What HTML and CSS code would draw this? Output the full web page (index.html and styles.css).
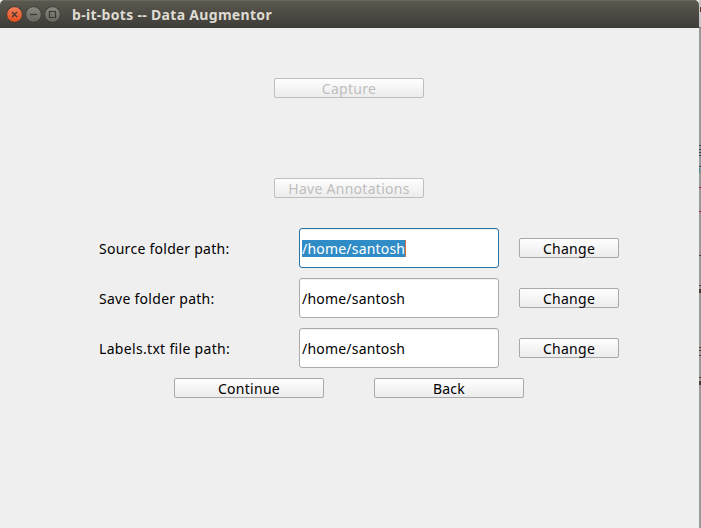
FILE: index.html
```html
<!DOCTYPE html>
<html lang="en">
<head>
<meta charset="utf-8">
<title>b-it-bots -- Data Augmentor</title>
<link rel="stylesheet" href="styles.css">
</head>
<body>
<div class="desktop">
<main class="window">
  <header class="titlebar">
    <svg class="controls" width="60" height="17" viewBox="0 0 60 17">
      <defs>
        <linearGradient id="close" x1="0" y1="0" x2="0" y2="1"><stop offset="0" stop-color="#f58059"/><stop offset="1" stop-color="#e04d1c"/></linearGradient>
        <linearGradient id="grey" x1="0" y1="0" x2="0" y2="1"><stop offset="0" stop-color="#8b8981"/><stop offset="1" stop-color="#65645d"/></linearGradient>
      </defs>
      <g stroke="#3a3833" stroke-width="1">
        <circle cx="8.5" cy="8.5" r="7.9" fill="url(#close)"/>
        <circle cx="27.5" cy="8.5" r="7.9" fill="url(#grey)"/>
        <circle cx="46.5" cy="8.5" r="7.9" fill="url(#grey)"/>
      </g>
      <g fill="none" stroke="#3a3833" stroke-width="1.2">
        <path d="M6 6l5 5M11 6l-5 5"/><path d="M24 8.5h7"/><path d="M43.5 5.5h6v6h-6z"/>
      </g>
    </svg>
    <h1 class="title">b-it-bots -- Data Augmentor</h1>
  </header>
  <section class="content">
    <button class="button wide capture" disabled>Capture</button>
    <button class="button wide annotations" disabled>Have Annotations</button>
    <div class="form">
      <span class="label source">Source folder path:</span><div class="field focused"><span class="selected">/home/santosh</span></div><button class="button change">Change</button>
      <span class="label save">Save folder path:</span><div class="field"><span>/home/santosh</span></div><button class="button change">Change</button>
      <span class="label labels">Labels.txt file path:</span><div class="field"><span>/home/santosh</span></div><button class="button change">Change</button>
    </div>
    <div class="actions"><button class="button wide continue">Continue</button><button class="button wide back">Back</button></div>
  </section>
</main>
<svg class="behind" width="2" height="528" viewBox="0 0 2 528" shape-rendering="crispEdges">
  <path fill="#999" d="M0 0h2v528H0z"/>
  <path fill="#c8c8c8" d="M0 0h2v27H0z"/>
  <path fill="#777" d="M0 27h2v1H0z"/>
  <path fill="#623b2b" d="M1 7h1v5H1z"/>
  <path fill="#354358" d="M0 145h2v1H0zM0 149h2v1H0zM0 152h2v1H0zM0 155h2v1H0zM0 166h2v1H0z"/>
  <path fill="#448b91" d="M0 168h1v5H0z"/>
  <path fill="#a72047" d="M0 187h2v1H0zM0 211h2v1H0z"/>
  <path fill="#443e3b" d="M0 255h2v1H0zM0 285h2v1H0zM0 289h2v4H0zM0 347h2v1H0zM0 350h2v1H0zM0 355h2v1H0zM0 377h2v1H0zM0 381h2v4H0z"/>
</svg>
</div>
</body>
</html>
```
FILE: styles.css
```css
* { box-sizing: border-box; }
body { margin: 0; background: #999; font: 14px/20px "Noto Sans", sans-serif; letter-spacing: 0.27px; color: #000; }
.desktop { display: flex; width: 701px; height: 528px; overflow: hidden; }
.window { width: 699px; height: 528px; background: #efefef; }
.behind { display: block; }
.titlebar { display: flex; align-items: center; height: 28px; padding: 1px 6px 0; border-radius: 5px 5px 0 0; background: linear-gradient(#5b594f, #3d3c38); box-shadow: inset 0 1px #69675c; }
.controls { flex: none; }
.title { margin: 0 0 0 6px; font-size: 14px; font-weight: 700; line-height: 20px; letter-spacing: 0.31px; color: #dfdbd2; white-space: nowrap; }
.content { display: flex; flex-direction: column; align-items: center; width: 698px; padding-top: 50px; }
.button { display: flex; align-items: center; justify-content: center; height: 20px; padding: 2px 0 0; border: 1px solid #a9a9a9; border-radius: 2px; background: linear-gradient(#fefefe, #ececec); font: inherit; line-height: 18px; letter-spacing: inherit; color: #000; white-space: nowrap; }
.button:disabled { border-color: #bebebe; color: #bebebe; }
.wide { width: 150px; }
.annotations { margin-top: 80px; }
.form { display: grid; grid-template-columns: 200px 200px 100px; grid-auto-rows: 40px; row-gap: 10px; align-items: center; width: 520px; margin: 30px 0 0 20px; }
.form .change { width: 100px; margin-left: 20px; }
.label { padding-top: 2px; white-space: nowrap; }
.labels { letter-spacing: 0.32px; }
.field { display: flex; align-items: center; height: 40px; padding: 2px 0 0 2px; border: 1px solid #ababab; border-radius: 3px; background: #fff; letter-spacing: 0.2px; box-shadow: inset 0 1px #f1f1f1; }
.focused { padding-top: 0; border-color: #2574a3; }
.selected { height: 17px; line-height: 17px; background: #308cc6; color: #fff; border-right: 1px solid #cf7339; }
.actions { display: flex; gap: 50px; margin-top: 10px; }
```
